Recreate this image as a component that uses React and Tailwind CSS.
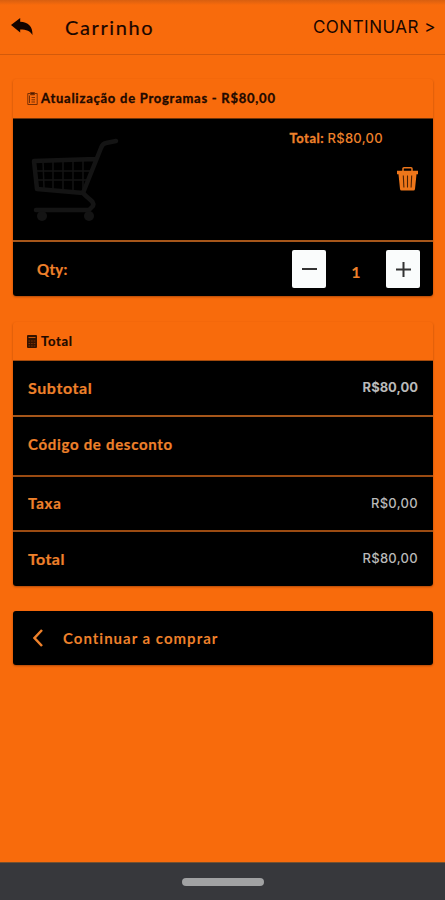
import React, { useState } from 'react';

const BackIcon = () => (
  <svg width="22" height="18" viewBox="0 0 22 18" className="shrink-0" fill="#120400">
    <path d="M0 7 9.200 0v3.800C17 4 21.800 8.500 21.500 17c-2.200-4.200-6-5.600-12.300-5.600v3z" />
  </svg>
);

const ClipboardIcon = () => (
  <svg width="11" height="13" viewBox="0 0 11 13" className="shrink-0" fill="none" stroke="#7a3004" strokeWidth="1">
    <path d="M3 1.500H.8v11h9.400v-11H8M4.500 5.500H8M4.500 7.800H8M4.500 10H8M2.500 3.500V11" />
    <path d="M3.500.6h4v2.200h-4z" fill="#4a1a00" />
  </svg>
);

const CalculatorIcon = () => (
  <svg width="10" height="13" viewBox="0 0 10 13" className="shrink-0">
    <rect width="10" height="13" rx="1" fill="#351300" />
    <path d="M1.500 2.500h7" stroke="#c95508" strokeWidth="1.200" />
    <path d="M1.500 6h7M1.500 8.500h7M1.500 11h7" stroke="#9c4004" strokeWidth=".7" strokeDasharray="1.600 1" />
  </svg>
);

const CartIcon = () => (
  <svg width="88" height="86" viewBox="0 0 88 86" fill="none" stroke="#141414" strokeLinecap="round" strokeLinejoin="round">
    <path d="M85 3 75 5c-3 .5-4 2-5 5L52 55 6 51 3 23l62-2" strokeWidth="4.500" />
    <path d="M4 33h57M5 42h52M12 23l1 27M22 23v28M32 22v29M42 22v30M52 22v31" strokeWidth="1.500" />
    <path d="M52 55c5 6 12 8 10 13l-4 4H5" strokeWidth="4.500" />
    <circle cx="11" cy="78" r="5" fill="#141414" stroke="none" />
    <circle cx="58" cy="78" r="5" fill="#141414" stroke="none" />
  </svg>
);

const TrashIcon = () => (
  <svg width="21" height="24" viewBox="0 0 21 24" fill="none">
    <path d="M6 4V1.800Q6 .8 7 .8h7q1 0 1 1V4" stroke="#ee761a" strokeWidth="1.500" />
    <path d="M0 3.800h21v3.400h-1.500L18 22q-.2 1.500-1.500 1.500h-12Q3.200 23.500 3 22L1.500 7.200H0z" fill="#ee761a" />
    <path d="m6.300 8.500.6 12M10.500 8.500v12M14.700 8.500l-.6 12" stroke="#4d2104" strokeWidth="1.100" />
  </svg>
);

const SummaryRow = ({ label, value, className, labelClass, valueClass }) => (
  <div className={`flex items-center justify-between px-[15px] ${className}`}>
    <span className={`text-[#ee812b] font-bold [-webkit-text-stroke:0.2px] ${labelClass}`}>{label}</span>
    {value && <span className={`font-['Inter',sans-serif] text-[13px] text-[#b9b9b9] ${valueClass}`}>{value}</span>}
  </div>
);

const App = () => {
  const [qty, setQty] = useState(1);

  return (
    <div className="h-[900px] w-[445px] flex flex-col bg-[#f86b0c] font-['Lato',sans-serif] overflow-hidden">
      <header className="h-[55px] shrink-0 flex items-center pl-[11px] pr-[9px] border-b border-[#d35a0b] text-[#190600] bg-gradient-to-b from-[#d85f10] via-[#f86b0c] via-[5px] to-[#f86b0c]">
        <BackIcon />
        <h1 className="ml-8 text-[20px] leading-none tracking-[1.6px] [-webkit-text-stroke:0.2px]">Carrinho</h1>
        <button className="ml-auto pt-px text-[17px] leading-none tracking-[0.5px] font-['Inter',sans-serif]">CONTINUAR &gt;</button>
      </header>

      <main className="flex-1 flex flex-col pt-6 pl-[13px] pr-3">
        {/* Product */}
        <section className="h-[217px] flex flex-col rounded-[3px] overflow-hidden shadow-[0_1px_2px_rgba(90,30,0,0.45)]">
          <div className="h-10 shrink-0 flex items-center gap-[3px] pl-[14px] border-b border-[#70340a] text-[#210900]">
            <ClipboardIcon />
            <span className="text-[13px] font-bold tracking-[0.750px] [-webkit-text-stroke:0.3px] whitespace-nowrap">Atualização de Programas - R$80,00</span>
          </div>
          <div className="h-[121px] shrink-0 flex bg-black pl-[18px] pr-[15px]">
            <div className="pt-[19px]"><CartIcon /></div>
            <div className="ml-auto pt-[11px] text-[13px] leading-4 text-[#ee812b]">
              <b className="[-webkit-text-stroke:0.3px] tracking-[0.5px]">Total:</b> <span className="font-['Inter',sans-serif] font-medium tracking-[0.3px]">R$80,00</span>
            </div>
            <button className="ml-[14px] self-start mt-[48px]"><TrashIcon /></button>
          </div>
          <div className="flex-1 flex items-center bg-black border-t-2 border-[#a6561a] pl-6 pr-[13px] text-[#ee812b]">
            <span className="text-[15px] font-bold tracking-[0.3px] [-webkit-text-stroke:0.2px]">Qty:</span>
            <button className="ml-auto w-[34px] h-[38px] rounded-[2px] bg-[#fafcfc] flex items-center justify-center" onClick={() => setQty(Math.max(1, qty - 1))}>
              <span className="w-[15px] h-[2px] bg-[#333]" />
            </button>
            <span className="w-[60px] text-center text-[16px] font-bold pt-1.5">{qty}</span>
            <button className="w-[34px] h-[38px] rounded-[2px] bg-[#fafcfc] flex items-center justify-center" onClick={() => setQty(qty + 1)}>
              <svg width="15" height="15" viewBox="0 0 15 15" stroke="#333" strokeWidth="2"><path d="M0 7.500h15M7.500 0v15" /></svg>
            </button>
          </div>
        </section>

        {/* Summary */}
        <section className="mt-[26px] h-[264px] flex flex-col rounded-[3px] overflow-hidden shadow-[0_1px_2px_rgba(90,30,0,0.45)]">
          <div className="h-[39px] shrink-0 flex items-center gap-[4px] pl-[14px] border-b border-[#a34a0c] text-[#210900]">
            <CalculatorIcon />
            <span className="text-[13px] font-bold tracking-[0.700px] [-webkit-text-stroke:0.2px] pt-0.5">Total</span>
          </div>
          <div className="flex-1 flex flex-col bg-black">
            <SummaryRow label="Subtotal" value="R$80,00" className="h-[54px]" labelClass="text-[16px] tracking-[0.6px]" valueClass="font-bold" />
            <SummaryRow label="Código de desconto" className="h-[60px] border-t-2 border-[#a6561a]" labelClass="text-[15px] tracking-[0.7px] -mt-1" />
            <SummaryRow label="Taxa" value="R$0,00" className="h-[55px] border-t-2 border-[#9b4b12]" labelClass="text-[15px] tracking-[0.800px]" valueClass="font-medium tracking-[0.300px]" />
            <SummaryRow label="Total" value="R$80,00" className="h-[56px] border-t-2 border-[#9b4b12]" labelClass="text-[16px] tracking-[0.4px]" valueClass="font-medium tracking-[0.300px]" />
          </div>
        </section>

        <button className="mt-[25px] h-[54px] flex items-center rounded-[3px] bg-black pl-[20px] text-[#ee812b] shadow-[0_1px_2px_rgba(90,30,0,0.45)]">
          <svg width="10" height="18" viewBox="0 0 10 18" fill="none" stroke="#ee812b" strokeWidth="2.500"><path d="M9 1 1.500 9 9 17" /></svg>
          <span className="ml-5 text-[15px] font-bold tracking-[1px]">Continuar a comprar</span>
        </button>
      </main>

      <footer className="h-[38px] shrink-0 flex items-center justify-center bg-[#37383c] border-t border-[#75512f]">
        <div className="w-[82px] h-[8px] rounded-full bg-[#a1a2a3]" />
      </footer>
    </div>
  );
};

export default App;
